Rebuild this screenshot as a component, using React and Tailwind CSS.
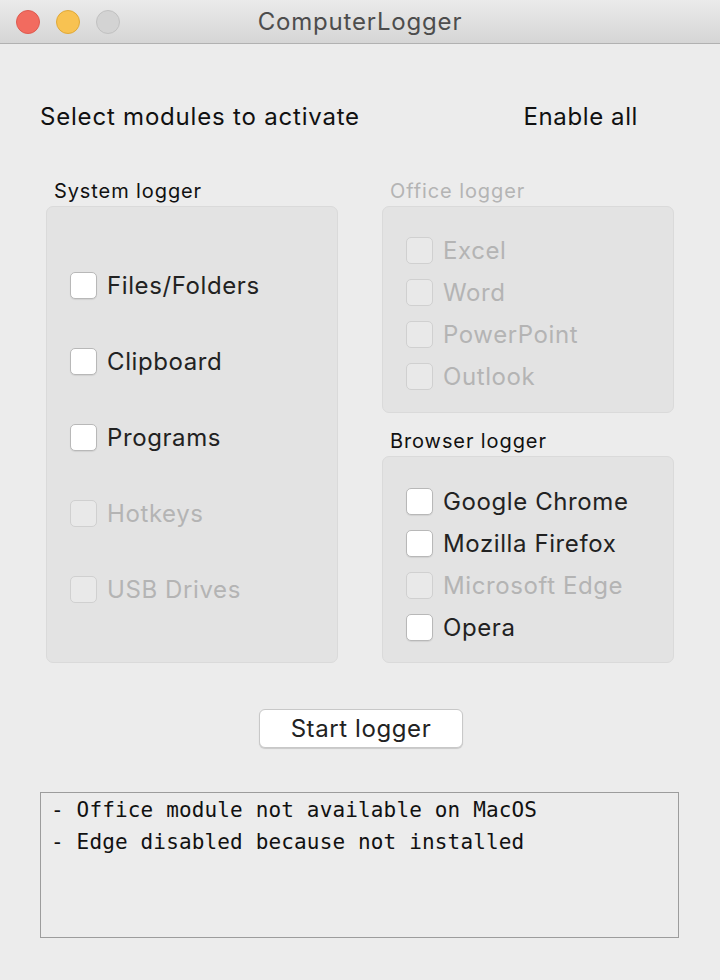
import React from 'react';

const sans = "font-['Inter','Liberation_Sans',Arial,sans-serif]";

const Check = ({ label, disabled }) => (
  <div className="flex items-center gap-[10px]">
    <span
      className={`w-[27px] h-[27px] rounded-[5px] border ${
        disabled ? 'bg-[#e9e9e9] border-[#d0d0d0]' : 'bg-white border-[#b8b8b8] shadow-[0_1px_1px_rgba(0,0,0,0.08)]'
      }`}
    />
    <span className={`text-[24px] tracking-[0.6px] leading-none pt-[1px] ${disabled ? 'text-[#b4b4b4]' : 'text-[#222222]'}`}>
      {label}
    </span>
  </div>
);

const Panel = ({ className, children }) => (
  <div className={`bg-[#e3e3e3] border border-[#dadada] rounded-[7px] ${className}`}>{children}</div>
);

export default function App() {
  const systemItems = [
    { label: 'Files/Folders' },
    { label: 'Clipboard' },
    { label: 'Programs' },
    { label: 'Hotkeys', disabled: true },
    { label: 'USB Drives', disabled: true },
  ];
  const officeItems = ['Excel', 'Word', 'PowerPoint', 'Outlook'];
  const browserItems = [
    { label: 'Google Chrome' },
    { label: 'Mozilla Firefox' },
    { label: 'Microsoft Edge', disabled: true },
    { label: 'Opera' },
  ];

  return (
    <div className={`w-[720px] h-[980px] bg-[#ececec] ${sans} overflow-hidden`}>
      {/* Title bar */}
      <div className="relative h-[44px] bg-gradient-to-b from-[#ebebeb] to-[#d5d5d5] border-b border-[#b1b1b1] flex items-center justify-center">
        <div className="absolute left-[16px] top-[10px] flex gap-[16px]">
          <span className="w-[24px] h-[24px] rounded-full bg-[#f26b5f] border border-[#de5a4f]" />
          <span className="w-[24px] h-[24px] rounded-full bg-[#f8c251] border border-[#e0a938]" />
          <span className="w-[24px] h-[24px] rounded-full bg-[#d3d3d3] border border-[#c1c1c1]" />
        </div>
        <span className="text-[24px] tracking-[0.8px] text-[#4d4d4d] leading-none">ComputerLogger</span>
      </div>

      <div className="px-[40px]">
        {/* Header */}
        <div className="mt-[58px] h-[30px] flex items-center justify-between pr-[42px]">
          <span className="text-[24px] tracking-[0.8px] text-[#111111] leading-none">Select modules to activate</span>
          <span className="text-[24px] tracking-[0.6px] text-[#111111] leading-none">Enable all</span>
        </div>

        {/* Columns */}
        <div className="mt-[47px] ml-[6px] flex gap-[44px]">
          <div className="w-[292px]">
            <div className="h-[24px] pl-[8px] flex items-center text-[20px] tracking-[0.9px] text-[#111111]">System logger</div>
            <Panel className="mt-[3px] h-[457px] pl-[23px] pt-[40px]">
              <div className="flex flex-col">
                {systemItems.map((it) => (
                  <div key={it.label} className="h-[76px] flex items-center">
                    <Check label={it.label} disabled={it.disabled} />
                  </div>
                ))}
              </div>
            </Panel>
          </div>

          <div className="w-[292px]">
            <div className="h-[24px] pl-[8px] flex items-center text-[20px] tracking-[0.9px] text-[#b4b4b4]">Office logger</div>
            <Panel className="mt-[3px] h-[207px] pl-[23px] pt-[22px]">
              {officeItems.map((l) => (
                <div key={l} className="h-[42px] flex items-center">
                  <Check label={l} disabled />
                </div>
              ))}
            </Panel>
            <div className="mt-[16px] h-[24px] pl-[8px] flex items-center text-[20px] tracking-[0.9px] text-[#111111]">Browser logger</div>
            <Panel className="mt-[3px] h-[207px] pl-[23px] pt-[23px]">
              {browserItems.map((it) => (
                <div key={it.label} className="h-[42px] flex items-center">
                  <Check label={it.label} disabled={it.disabled} />
                </div>
              ))}
            </Panel>
          </div>
        </div>

        {/* Button */}
        <div className="mt-[46px] flex justify-center pl-[2px]">
          <button className="w-[204px] h-[39px] bg-white border border-[#c8c8c8] rounded-[6px] shadow-[0_1px_1px_rgba(0,0,0,0.15)] text-[24px] tracking-[0.6px] text-[#222222] leading-none">
            Start logger
          </button>
        </div>

        {/* Log */}
        <div className="mt-[44px] w-[639px] h-[146px] border border-[#9c9c9c] bg-[#ececec] pl-[10px] pt-[1px] font-['DejaVu_Sans_Mono',monospace] text-[21px] tracking-[0.15px] leading-[32px] text-[#111111] whitespace-nowrap">
          <div>- Office module not available on MacOS</div>
          <div>- Edge disabled because not installed</div>
        </div>
      </div>
    </div>
  );
}
